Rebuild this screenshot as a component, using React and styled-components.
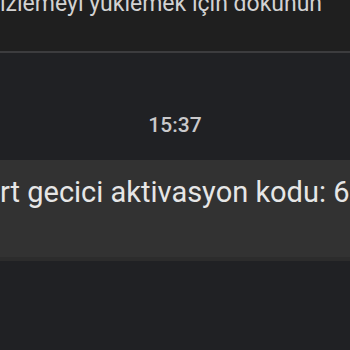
import React from "react";
import styled, { createGlobalStyle } from "styled-components";

const Global = createGlobalStyle`
  html, body { margin: 0; padding: 0; background: #202124; }
  body { font-family: Roboto, "Noto Sans", sans-serif; overflow: hidden; }
`;

const Screen = styled.div`
  width: 350px;
  height: 350px;
  overflow: hidden;
  display: flex;
  flex-direction: column;
  background: #202124;
`;

const Header = styled.div`
  height: 51px;
  background: #1f1f1f;
  overflow: hidden;
  flex-shrink: 0;
`;

const HeaderText = styled.div`
  margin-top: -8px;
  font-size: 23px;
  line-height: 23px;
  color: #d2d2d2;
  white-space: nowrap;
`;

const Divider = styled.div`
  height: 2px;
  background: #3c3c3e;
  flex-shrink: 0;
`;

const Thread = styled.div`
  display: flex;
  flex-direction: column;
  align-items: stretch;
  padding-top: 60px;
`;

const Time = styled.div`
  text-align: center;
  font-size: 21px;
  font-weight: 500;
  line-height: 24px;
  color: #c9c9cb;
  height: 47px;
`;

const Bubble = styled.div`
  background: #323232;
  height: 97px;
  border-bottom: 4px solid #2c2c2c;
  overflow: hidden;
  display: flex;
  align-items: flex-start;
`;

const BubbleText = styled.div`
  margin-top: 15px;
  font-size: 29px;
  line-height: 34px;
  color: #e6e6e6;
  white-space: nowrap;
`;

export default function App() {
  return (
    <Screen>
      <Global />
      <Header>
        <HeaderText>izlemeyi yüklemek için dokunun</HeaderText>
      </Header>
      <Divider />
      <Thread>
        <Time>15:37</Time>
        <Bubble>
          <BubbleText>rt gecici aktivasyon kodu: 6</BubbleText>
        </Bubble>
      </Thread>
    </Screen>
  );
}
